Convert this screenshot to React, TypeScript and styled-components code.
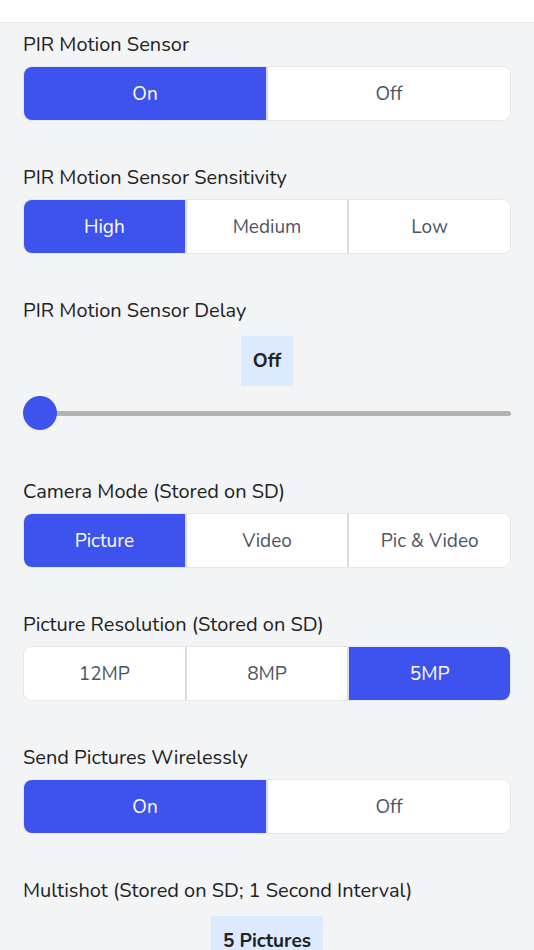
import { createGlobalStyle } from "styled-components";
import styled from "styled-components";

const GlobalStyle = createGlobalStyle`
  html, body {
    margin: 0;
    padding: 0;
    background: #f3f4f6;
    font-family: "Nunito", Lato, "Noto Sans", sans-serif;
    color: #222;
  }
`;

const Page = styled.div`
  min-height: 950px;
  background: #f3f4f6;
`;

const Header = styled.div`
  height: 22px;
  background: #ffffff;
  border-bottom: 1px solid #e5e7eb;
`;

const Content = styled.div`
  padding: 10px 23px 0 23px;
  display: flex;
  flex-direction: column;
  gap: 45px;
`;

const Section = styled.div`
  display: flex;
  flex-direction: column;
`;

const Label = styled.div`
  font-size: 20px;
  line-height: 24px;
  color: #222;
  margin-bottom: 9px;
`;

const Group = styled.div`
  display: flex;
  height: 55px;
  border: 1px solid #e5e7eb;
  border-radius: 9px;
  overflow: hidden;
  background: #fff;
  box-sizing: border-box;
`;

const Option = styled.div<{ $active: boolean }>`
  flex: 1;
  display: flex;
  align-items: center;
  justify-content: center;
  font-size: 19px;
  background: ${(p) => (p.$active ? "#3e52ee" : "#ffffff")};
  color: ${(p) => (p.$active ? "#ffffff" : "#4b5563")};

  & + & {
    border-left: 2px solid #d8dce3;
  }
`;

const Badge = styled.div`
  align-self: center;
  background: #dbeafe;
  font-weight: 700;
  font-size: 19px;
  color: #222;
  padding: 0 12px;
  height: 50px;
  display: flex;
  align-items: center;
  margin-top: 4px;
`;

const SliderWrap = styled.div`
  position: relative;
  height: 34px;
  margin-top: 10px;
  margin-bottom: 5px;
  display: flex;
  align-items: center;
`;

const Track = styled.div`
  flex: 1;
  height: 5px;
  border-radius: 3px;
  background: #b3b3b3;
  margin-left: 17px;
`;

const Thumb = styled.div`
  position: absolute;
  left: 0;
  top: 0;
  width: 34px;
  height: 34px;
  border-radius: 50%;
  background: #3e52ee;
`;

type ToggleProps = { label: string; options: string[]; active: number };

const Toggle = ({ label, options, active }: ToggleProps) => (
  <Section>
    <Label>{label}</Label>
    <Group>
      {options.map((o, i) => (
        <Option key={o} $active={i === active}>
          {o}
        </Option>
      ))}
    </Group>
  </Section>
);

export default function App() {
  return (
    <Page>
      <GlobalStyle />
      <Header />
      <Content>
        <Toggle label="PIR Motion Sensor" options={["On", "Off"]} active={0} />
        <Toggle
          label="PIR Motion Sensor Sensitivity"
          options={["High", "Medium", "Low"]}
          active={0}
        />
        <Section>
          <Label>PIR Motion Sensor Delay</Label>
          <Badge>Off</Badge>
          <SliderWrap>
            <Track />
            <Thumb />
          </SliderWrap>
        </Section>
        <Toggle
          label="Camera Mode (Stored on SD)"
          options={["Picture", "Video", "Pic & Video"]}
          active={0}
        />
        <Toggle
          label="Picture Resolution (Stored on SD)"
          options={["12MP", "8MP", "5MP"]}
          active={2}
        />
        <Toggle label="Send Pictures Wirelessly" options={["On", "Off"]} active={0} />
        <Section>
          <Label>Multishot (Stored on SD; 1 Second Interval)</Label>
          <Badge>5 Pictures</Badge>
        </Section>
      </Content>
    </Page>
  );
}
